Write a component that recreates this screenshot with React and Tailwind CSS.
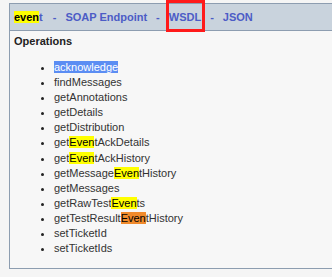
import React from "react";

const Y = ({ children }) => <span className="bg-[#ffff00] text-black">{children}</span>;
const O = ({ children }) => <span className="bg-[#f08a2c] text-black">{children}</span>;

const items = [
  [<span key="a" className="bg-[#5b8df3] text-white">acknowledge</span>],
  ["findMessages"],
  ["getAnnotations"],
  ["getDetails"],
  ["getDistribution"],
  ["get", <Y key="y">Even</Y>, "tAckDetails"],
  ["get", <Y key="y">Even</Y>, "tAckHistory"],
  ["getMessage", <Y key="y">Even</Y>, "tHistory"],
  ["getMessages"],
  ["getRawTest", <Y key="y">Even</Y>, "ts"],
  ["getTestResult", <O key="o">Even</O>, "tHistory"],
  ["setTicketId"],
  ["setTicketIds"],
];

export default function App() {
  return (
    <div className="relative w-[332px] h-[277px] overflow-hidden bg-[#f5f5f5] pt-[3px] pl-[9px] font-['Liberation_Sans',Arial,sans-serif]">
      <div className="w-[340px] h-[266px] border-l border-t border-b border-[#8d9db0] bg-[#f7f7f7]">
        <div className="h-[27px] border-b border-[#8d9db0] bg-[#c9d3dd] pl-[4px] flex items-center text-[11px] font-bold text-[#4c5cc6] leading-[13px]">
          <span><Y>even</Y>t</span>
          <span className="ml-[10px] mr-[9px]">-</span>
          <span>SOAP Endpoint</span>
          <span className="mx-[9px]">-</span>
          <span>WSDL</span>
          <span className="mx-[9px]">-</span>
          <span>JSON</span>
        </div>
        <div className="pl-[4px] pt-[4px] text-[11px] text-[#333]">
          <div className="font-bold leading-[13px] text-[#222]">Operations</div>
          <ul className="mt-[12px] ml-[39px] list-disc text-[#333]">
            {items.map((parts, i) => (
              <li key={i} className="leading-[15.1px] h-[15.1px] marker:text-[9px] marker:text-[#222] pl-[1px]">
                {parts}
              </li>
            ))}
          </ul>
        </div>
      </div>
      <div className="absolute left-[166px] top-0 w-[39px] h-[32px] border-[3px] border-[#ff1a1a]" />
    </div>
  );
}
